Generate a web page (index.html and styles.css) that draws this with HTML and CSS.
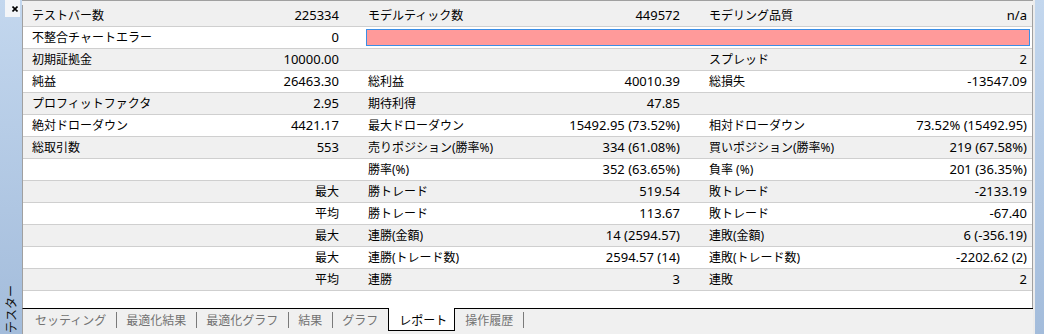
FILE: index.html
```html
<!DOCTYPE html>
<html lang="ja">
<head>
<meta charset="utf-8">
<title>テスター レポート</title>
<link rel="stylesheet" href="styles.css">
</head>
<body>
<div class="window">
  <aside class="side">
    <div class="close"><svg width="6" height="6" viewBox="0 0 6 6"><path d="M0.5 0.5L5.5 5.5M5.5 0.5L0.5 5.5" stroke="#000" stroke-width="1.6"/></svg></div>
    <div class="side-label">テスター</div>
  </aside>
  <main class="main">
    <div class="topgap"></div>
    <div class="report">
      <div class="row alt">
        <div class="grp g1"><span>テストバー数</span><span class="num">225334</span></div>
        <div class="grp g2"><span>モデルティック数</span><span class="num">449572</span></div>
        <div class="grp g3"><span>モデリング品質</span><span class="num">n/a</span></div>
      </div>
      <div class="row">
        <div class="grp g1"><span>不整合チャートエラー</span><span class="num">0</span></div>
        <div class="errcell"><div class="errbar"></div></div>
      </div>
      <div class="row alt">
        <div class="grp g1"><span>初期証拠金</span><span class="num">10000.00</span></div>
        <div class="grp g2"><span></span><span></span></div>
        <div class="grp g3"><span>スプレッド</span><span class="num">2</span></div>
      </div>
      <div class="row">
        <div class="grp g1"><span>純益</span><span class="num">26463.30</span></div>
        <div class="grp g2"><span>総利益</span><span class="num">40010.39</span></div>
        <div class="grp g3"><span>総損失</span><span class="num">-13547.09</span></div>
      </div>
      <div class="row alt">
        <div class="grp g1"><span>プロフィットファクタ</span><span class="num">2.95</span></div>
        <div class="grp g2"><span>期待利得</span><span class="num">47.85</span></div>
        <div class="grp g3"><span></span><span></span></div>
      </div>
      <div class="row">
        <div class="grp g1"><span>絶対ドローダウン</span><span class="num">4421.17</span></div>
        <div class="grp g2"><span>最大ドローダウン</span><span class="num">15492.95 (73.52%)</span></div>
        <div class="grp g3"><span>相対ドローダウン</span><span class="num">73.52% (15492.95)</span></div>
      </div>
      <div class="row alt">
        <div class="grp g1"><span>総取引数</span><span class="num">553</span></div>
        <div class="grp g2"><span>売りポジション(勝率%)</span><span class="num">334 (61.08%)</span></div>
        <div class="grp g3"><span>買いポジション(勝率%)</span><span class="num">219 (67.58%)</span></div>
      </div>
      <div class="row">
        <div class="grp g1"><span></span><span></span></div>
        <div class="grp g2"><span>勝率(%)</span><span class="num">352 (63.65%)</span></div>
        <div class="grp g3"><span>負率 (%)</span><span class="num">201 (36.35%)</span></div>
      </div>
      <div class="row alt">
        <div class="grp g1"><span></span><span>最大</span></div>
        <div class="grp g2"><span>勝トレード</span><span class="num">519.54</span></div>
        <div class="grp g3"><span>敗トレード</span><span class="num">-2133.19</span></div>
      </div>
      <div class="row">
        <div class="grp g1"><span></span><span>平均</span></div>
        <div class="grp g2"><span>勝トレード</span><span class="num">113.67</span></div>
        <div class="grp g3"><span>敗トレード</span><span class="num">-67.40</span></div>
      </div>
      <div class="row alt">
        <div class="grp g1"><span></span><span>最大</span></div>
        <div class="grp g2"><span>連勝(金額)</span><span class="num">14 (2594.57)</span></div>
        <div class="grp g3"><span>連敗(金額)</span><span class="num">6 (-356.19)</span></div>
      </div>
      <div class="row">
        <div class="grp g1"><span></span><span>最大</span></div>
        <div class="grp g2"><span>連勝(トレード数)</span><span class="num">2594.57 (14)</span></div>
        <div class="grp g3"><span>連敗(トレード数)</span><span class="num">-2202.62 (2)</span></div>
      </div>
      <div class="row alt">
        <div class="grp g1"><span></span><span>平均</span></div>
        <div class="grp g2"><span>連勝</span><span class="num">3</span></div>
        <div class="grp g3"><span>連敗</span><span class="num">2</span></div>
      </div>
      <div class="row last"></div>
    </div>
    <nav class="tabs">
      <span class="tab t1">セッティング</span><span class="sep"></span>
      <span class="tab">最適化結果</span><span class="sep"></span>
      <span class="tab">最適化グラフ</span><span class="sep"></span>
      <span class="tab">結果</span><span class="sep"></span>
      <span class="tab pre">グラフ</span>
      <span class="tab active">レポート</span>
      <span class="tab post">操作履歴</span><span class="sep"></span>
    </nav>
  </main>
  <div class="rightbar"></div>
</div>
</body>
</html>
```
FILE: styles.css
```css
html, body {
  margin: 0;
  padding: 0;
}
body {
  width: 1044px;
  height: 334px;
  overflow: hidden;
  background: #f0f0f0;
  font-family: "Noto Sans", "Noto Sans CJK JP", sans-serif;
  font-size: 12px;
  color: #000;
}
.window {
  display: flex;
  height: 334px;
}
.side {
  width: 22px;
  flex: none;
  background: linear-gradient(#c3d7ee, #a3bcdb);
  display: flex;
  flex-direction: column;
  justify-content: space-between;
}
.close {
  margin-left: 5px;
  padding-left: 4px;
  width: 11px;
  height: 17px;
  background: #f3f5f8;
  display: flex;
  align-items: center;
  justify-content: center;
}
.side-label {
  writing-mode: vertical-rl;
  text-orientation: sideways;
  transform: rotate(180deg);
  font-family: "Noto Sans CJK JP", sans-serif;
  font-size: 12px;
  line-height: 14px;
  color: #111;
  align-self: center;
  margin-bottom: 1px;
}
.main {
  width: 1011px;
  flex: none;
  display: flex;
  flex-direction: column;
}
.topgap {
  height: 4px;
  border-top: 1px solid #a0a0a0;
  background: #f0f0f0;
}
.report {
  height: 303px;
  border-left: 1px solid #a0a0a0;
  border-right: 1px solid #a0a0a0;
  background: #fff;
  overflow: hidden;
}
.row {
  display: flex;
  height: 21px;
  line-height: 21px;
  border-bottom: 1px solid #cfcfcf;
  background: #fff;
}
.row.alt {
  background: #f0f0f0;
}
.row.last {
  height: 17px;
  border-bottom: none;
}
.grp {
  display: flex;
  justify-content: space-between;
  white-space: nowrap;
  box-sizing: border-box;
}
.num {
  font-size: 13px;
}
.g1 {
  width: 322px;
  padding: 0 6px 0 9px;
}
.g2 {
  width: 341px;
  padding: 0 6px 0 23px;
}
.g3 {
  width: 346px;
  padding: 0 5px 0 23px;
}
.errcell {
  flex: 1;
  display: flex;
  padding: 2px 2px 2px 21px;
}
.errbar {
  flex: 1;
  background: #ff9a9a;
  border: 1px solid #3a8ee6;
}
.tabs {
  height: 25px;
  border-top: 1px solid #000;
  border-left: 1px solid #a0a0a0;
  display: flex;
  align-items: flex-start;
  padding-left: 3px;
  font-family: "Noto Sans CJK JP", sans-serif;
}
.tab {
  padding: 0 10px 0 9px;
  line-height: 21px;
  color: #737373;
  white-space: nowrap;
}
.sep {
  width: 1px;
  height: 16px;
  margin-top: 3px;
  background: #7a7a7a;
}
.tab.active {
  margin-top: -1px;
  padding: 1px 7px 0 10px;
  height: 21px;
  background: #fff;
  color: #000;
  border: 1px solid #000;
  border-top: none;
}
.tab.post {
  padding-left: 10px;
}
.rightbar {
  width: 9px;
  flex: none;
  border-left: 2px solid #ececec;
  background: linear-gradient(#c3d7ee, #a3bcdb);
}
```
